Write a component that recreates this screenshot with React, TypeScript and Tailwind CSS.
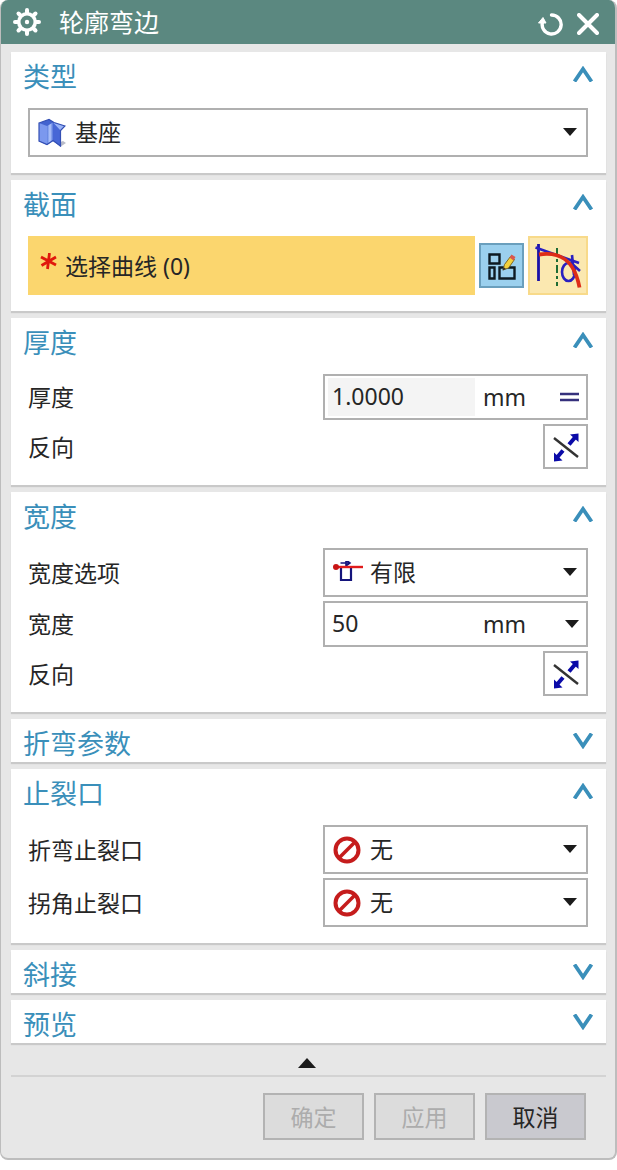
import React, { useState } from 'react';

function GearIcon() {
  return (
    <svg width="28" height="28" viewBox="0 0 28 28" fill="none">
      <path
        d="M14 2v24M2 14h24M5.500 5.500l17 17M22.500 5.500l-17 17"
        stroke="#fff"
        strokeWidth="4"
        strokeLinecap="round"
      />
      <circle cx="14" cy="14" r="10" fill="#fff" />
      <circle cx="14" cy="14" r="6.500" fill="#5b8880" />
      <circle cx="14" cy="14" r="2.200" fill="#fff" />
    </svg>
  );
}

function ResetIcon() {
  return (
    <svg width="26" height="26" viewBox="0 0 26 26" fill="none">
      <path d="M14.500 4A9.500 9.500 0 1 1 5.500 11" stroke="#fff" strokeWidth="3.400" strokeLinecap="round" />
      <path d="M6 6.500L9 12H1.500z" fill="#fff" stroke="#fff" strokeLinejoin="round" />
    </svg>
  );
}

function CloseIcon() {
  return (
    <svg width="22" height="22" viewBox="0 0 22 22" fill="none">
      <path d="M2 2l18 18M20 2L2 20" stroke="#fff" strokeWidth="4" strokeLinecap="round" />
    </svg>
  );
}

function Chevron({ open }: { open: boolean }) {
  return (
    <svg width="22" height="16" viewBox="0 0 22 16" fill="none">
      <path
        d={open ? 'M2.500 15.500L11 3L19.500 15.500' : 'M2.500 0.500L11 13L19.500 0.500'}
        stroke="#3a8fba"
        strokeWidth="3.800"
      />
    </svg>
  );
}

function Arrow({ className = '' }: { className?: string }) {
  return (
    <svg className={className} width="14" height="8" viewBox="0 0 14 8">
      <path d="M0 0h14L7 8z" fill="#1b1b1b" />
    </svg>
  );
}

function BaseIcon() {
  return (
    <svg width="28" height="30" viewBox="0 0 28 30">
      <defs>
        <linearGradient id="baseFace" x1="0" y1="0" x2="1" y2="0">
          <stop offset="0%" stopColor="#5d7fe0" />
          <stop offset="50%" stopColor="#b4c8fb" />
          <stop offset="100%" stopColor="#5576dc" />
        </linearGradient>
      </defs>
      <path d="M20 25l5-2 3 2-6 4z" fill="#b9bcc8" />
      <path d="M1 5L11 1.500l5 3L27 8l-4.500 5v15.500L15 23l-6 4-8-4z" fill="#4263cf" />
      <path d="M1 5l8 3v18.500L1 23z" fill="#7b98ee" />
      <path d="M9 8l6-3.500V23l-6 3.500z" fill="url(#baseFace)" />
      <path d="M15 5l7.500 7v16L15 22.500z" fill="#4767d6" />
      <path d="M15 4.500L27 8l-4.500 4.500z" fill="#9ab4f7" />
      <path
        d="M1 5L11 1.500l5 3L27 8l-4.500 4.500V28L15 22.500 9 26.500 1 23z"
        fill="none"
        stroke="#3450b4"
        strokeWidth="1.200"
      />
    </svg>
  );
}

function SketchIcon() {
  return (
    <svg width="30" height="30" viewBox="0 0 30 30" fill="none">
      <path d="M2.500 3.500h10v9h-10zM2.500 16.500h5v11h-5zM12.500 16.500h15v11h-15z" stroke="#0d1a22" strokeWidth="2.400" />
      <path d="M16 19l1.500-5.500 6-8 4 3-6 8.500z" fill="#f3d13c" stroke="#7d6a28" />
      <path d="M22.500 6.500l2-3 4 2.500-2 3.500z" fill="#d8574e" />
      <path d="M15.500 19.500l1-3.500 2.500 2z" fill="#333" />
    </svg>
  );
}

function CurveIcon() {
  return (
    <svg width="48" height="48" viewBox="0 0 48 48" fill="none">
      <path d="M4.500 2v37" stroke="#1b12a8" strokeWidth="2.800" />
      <path d="M1.500 5.500L45 21M36 20l10 9" stroke="#2a1fc0" strokeWidth="2.600" />
      <path d="M23 6v38" stroke="#1d6b34" strokeWidth="2" strokeDasharray="8 3 3 3" />
      <ellipse cx="34.500" cy="30" rx="6.500" ry="9" stroke="#2a1fc0" strokeWidth="2.600" />
      <path d="M38 13l2 20" stroke="#2a1fc0" strokeWidth="2.600" />
      <path d="M5 12.500c20-3 35 4 40.500 33" stroke="#de2c17" strokeWidth="3.800" />
    </svg>
  );
}

function ReverseIcon() {
  return (
    <svg width="30" height="30" viewBox="0 0 30 30" fill="none">
      <path d="M3 6l24 19" stroke="#333" strokeWidth="2.400" />
      <path d="M18 12.500l6-7M12 18.500l-6 7" stroke="#0a0aa8" strokeWidth="4" />
      <path d="M27.500 1.500v8.500l-8.500-7.500zM3 29.500v-9l8.500 8z" fill="#0a0aa8" />
    </svg>
  );
}

function FiniteIcon() {
  return (
    <svg width="32" height="24" viewBox="0 0 32 24" fill="none">
      <path d="M8 6h10v13H8z" stroke="#14147c" strokeWidth="2.200" />
      <path d="M7.500 2h8M13 -1l4 3-4 3z" stroke="#14147c" strokeWidth="1.600" />
      <path d="M3 6h27" stroke="#e01b1b" strokeWidth="2.400" />
      <circle cx="3" cy="6" r="3" fill="#c81414" />
    </svg>
  );
}

function NoneIcon() {
  return (
    <svg width="28" height="28" viewBox="0 0 28 28" fill="none">
      <circle cx="14" cy="14" r="11.500" stroke="#c51c1c" strokeWidth="4" />
      <path d="M6 22L22 6" stroke="#c51c1c" strokeWidth="3.600" />
    </svg>
  );
}

function Section({ title, children }: { title: string; children?: React.ReactNode }) {
  const [open, setOpen] = useState(Boolean(children));

  return (
    <section className="bg-white shadow-[0_2px_1px_#c9c9c9]">
      <button
        type="button"
        aria-expanded={open}
        onClick={() => setOpen(!open)}
        className="flex h-[43px] w-full items-center justify-between pl-3 pr-3"
      >
        <h2 className="pt-1.5 text-[27px] leading-9 text-[#3a8fba]">{title}</h2>
        <Chevron open={open} />
      </button>
      {open && children && (
        <div className="flex flex-col gap-1 pl-[17px] pr-[18px] pt-[13px] pb-4">{children}</div>
      )}
    </section>
  );
}

function Row({ id, label, children }: { id: string; label: string; children: React.ReactNode }) {
  return (
    <div className="flex items-center justify-between">
      <label htmlFor={id}>{label}</label>
      {children}
    </div>
  );
}

type SelectProps = { id: string; icon: React.ReactNode; value: string; label?: string; wide?: boolean };

function Select({ id, icon, value, label, wide }: SelectProps) {
  return (
    <div className={wide ? 'relative w-full' : 'relative w-[265px]'}>
      <select
        id={id}
        aria-label={label}
        className="block h-[49px] w-full appearance-none border-2 border-[#b0b0b0] bg-white pl-[45px] pr-8 pb-0.5"
      >
        <option>{value}</option>
      </select>
      <span className="pointer-events-none absolute inset-y-0 left-[10px] flex items-center">{icon}</span>
      <Arrow className="pointer-events-none absolute right-[11px] top-5" />
    </div>
  );
}

function ReverseButton({ id }: { id: string }) {
  return (
    <button
      id={id}
      type="button"
      className="flex size-[45px] items-center justify-center border-2 border-[#b0b0b0] bg-white"
    >
      <ReverseIcon />
    </button>
  );
}

export default function App() {
  return (
    <main className="overflow-hidden rounded-lg border-b-2 border-l border-r-2 border-[#bdbdbd] bg-[#e7e7e7] font-['Noto_Sans','Noto_Sans_CJK_SC',sans-serif] text-[23px] leading-8 text-[#262626]">
      <header className="flex h-11 items-center bg-[#5b8880] pl-3 pr-4 text-white">
        <GearIcon />
        <h1 className="ml-[18px] flex-1 text-[25px] leading-9">轮廓弯边</h1>
        <button type="button" aria-label="重置" className="mr-[14px] pt-1">
          <ResetIcon />
        </button>
        <button type="button" aria-label="关闭" className="pt-1">
          <CloseIcon />
        </button>
      </header>

      <div className="flex flex-col gap-[7px] pt-2 pl-[10px] pr-[9px]">
        <Section title="类型">
          <Select id="type" label="类型" icon={<BaseIcon />} value="基座" wide />
        </Section>

        <Section title="截面">
          <div className="flex items-center gap-1">
            <div className="flex h-[59px] flex-1 items-center bg-[#fbd66e] pl-3">
              <svg className="mb-2 mr-2" width="17" height="17" viewBox="0 0 17 17">
                <path
                  d="M9.500 0L7.500 16M1 4l15 8M1.500 12.500L16 4"
                  stroke="#e0180c"
                  strokeWidth="2.800"
                />
              </svg>
              选择曲线 (0)
            </div>
            <button
              type="button"
              aria-label="绘制截面"
              className="flex size-[45px] items-center justify-center border-2 border-[#6a9fbd] bg-[#9bd0ee]"
            >
              <SketchIcon />
            </button>
            <button
              type="button"
              aria-label="曲线"
              className="flex h-[59px] w-[60px] items-center justify-center border-2 border-[#f8da8a] bg-[#fbe8b0]"
            >
              <CurveIcon />
            </button>
          </div>
        </Section>

        <Section title="厚度">
          <Row id="thickness" label="厚度">
            <div className="flex h-[46px] w-[265px] items-center border-2 border-[#b0b0b0] bg-white pl-[3px] pr-[7px]">
              <input
                id="thickness"
                readOnly
                defaultValue="1.0000"
                className="h-[38px] w-[147px] bg-[#f4f4f4] pl-1 pb-0.5"
              />
              <span className="flex-1 pl-2">mm</span>
              <button type="button" aria-label="公式">
                <svg width="19" height="10" viewBox="0 0 19 10">
                  <path d="M0 2h19M0 8h19" stroke="#35307c" strokeWidth="2.400" />
                </svg>
              </button>
            </div>
          </Row>
          <Row id="thickness-reverse" label="反向">
            <ReverseButton id="thickness-reverse" />
          </Row>
        </Section>

        <Section title="宽度">
          <Row id="width-option" label="宽度选项">
            <Select id="width-option" icon={<FiniteIcon />} value="有限" />
          </Row>
          <Row id="width" label="宽度">
            <div className="flex h-[46px] w-[265px] items-center border-2 border-[#b0b0b0] bg-white pl-[3px] pr-[7px]">
              <input id="width" defaultValue="50" className="h-[38px] w-[147px] pl-1 pb-0.5" />
              <span className="flex-1 pl-2">mm</span>
              <button type="button" aria-label="宽度菜单">
                <Arrow />
              </button>
            </div>
          </Row>
          <Row id="width-reverse" label="反向">
            <ReverseButton id="width-reverse" />
          </Row>
        </Section>

        <Section title="折弯参数" />

        <Section title="止裂口">
          <Row id="bend-relief" label="折弯止裂口">
            <Select id="bend-relief" icon={<NoneIcon />} value="无" />
          </Row>
          <Row id="corner-relief" label="拐角止裂口">
            <Select id="corner-relief" icon={<NoneIcon />} value="无" />
          </Row>
        </Section>

        <Section title="斜接" />
        <Section title="预览" />
      </div>

      <footer className="pl-[10px] pr-[9px]">
        <button
          type="button"
          aria-label="收起"
          className="flex h-[34px] w-full items-center justify-center border-b-2 border-[#d3d3d3] pt-2 pr-1"
        >
          <svg width="18" height="10" viewBox="0 0 18 10">
            <path d="M9 0l9 10H0z" fill="#1b1b1b" />
          </svg>
        </button>
        <div className="flex justify-end gap-[10px] pt-4 pr-5 pb-[18px]">
          <button type="button" disabled className="h-[47px] w-[101px] border-2 border-[#b3b3b3] bg-[#dcdcdc] text-[#acacac]">
            确定
          </button>
          <button type="button" disabled className="h-[47px] w-[101px] border-2 border-[#b3b3b3] bg-[#dcdcdc] text-[#acacac]">
            应用
          </button>
          <button type="button" className="h-[47px] w-[101px] border-2 border-[#b3b3b3] bg-[#c9c9cf]">
            取消
          </button>
        </div>
      </footer>
    </main>
  );
}
